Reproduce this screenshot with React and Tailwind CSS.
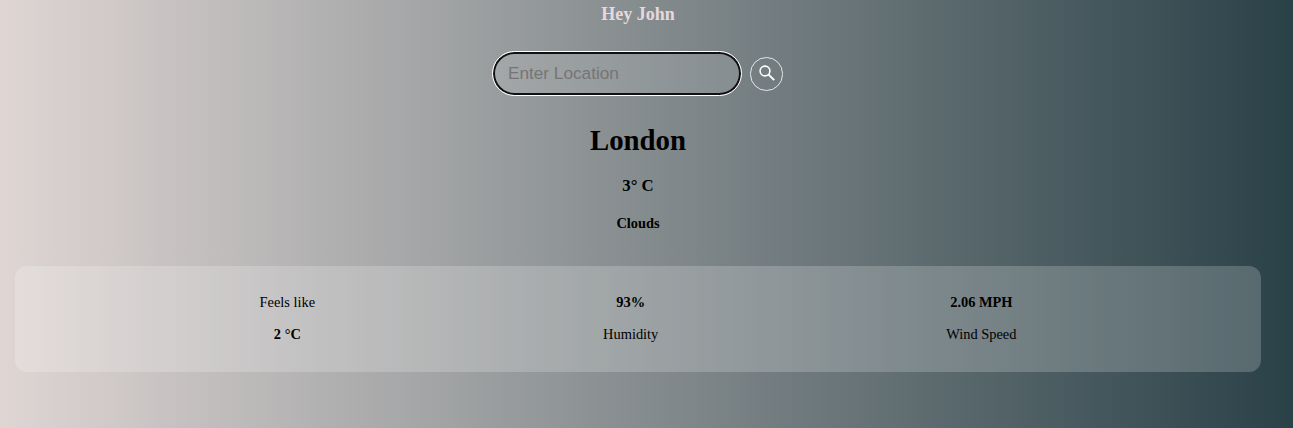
const stats = [
  { top: 'Feels like', bottom: '2 °C', bold: 'bottom' },
  { top: '93%', bottom: 'Humidity', bold: 'top' },
  { top: '2.06 MPH', bottom: 'Wind Speed', bold: 'top' },
];

function SearchBar() {
  return (
    <form className="mt-[26px] mr-[2px] flex items-center gap-[8px]" onSubmit={(e) => e.preventDefault()}>
      <input
        type="text"
        placeholder="Enter Location"
        className="h-[45px] w-[250px] rounded-full border border-white bg-white/10 px-[15.5px] font-['Liberation_Sans',sans-serif] text-[17.2px] text-black shadow-[inset_0_0_0_2px_#101010] outline-none placeholder:text-[#757575]"
      />
      <button
        type="submit"
        aria-label="Search"
        className="flex h-[34px] w-[33px] items-center justify-center rounded-full border border-white/80 pb-[2px] pl-px text-white"
      >
        <svg width="16" height="16" viewBox="0 0 16 16" fill="none" stroke="currentColor">
          <circle cx="6" cy="6" r="4.9" strokeWidth="1.6" />
          <path d="M9.6 9.6 15.2 15.2" strokeWidth="1.9" />
        </svg>
      </button>
    </form>
  );
}

function Stat({ top, bottom, bold }) {
  return (
    <div className="flex flex-col items-center gap-[16px] text-[14.4px] leading-[16px]">
      <p className={bold === 'top' ? 'font-bold' : ''}>{top}</p>
      <p className={bold === 'bottom' ? 'font-bold' : ''}>{bottom}</p>
    </div>
  );
}

export default function App() {
  return (
    <main className="flex h-[428px] flex-col items-center overflow-hidden bg-[linear-gradient(to_right,#dfd6d4,#2a4148)] pr-[32px] pl-[15px] font-['Liberation_Serif',serif] text-black">
      <h3 className="mt-[3px] text-[18px] leading-[22px] font-bold text-[#e6d9d9]">Hey John</h3>
      <SearchBar />
      <h1 className="mt-[27px] text-[28.8px] leading-[34px] font-bold">London</h1>
      <h3 className="mt-[19px] text-[16.8px] leading-[20px] font-bold">3° C</h3>
      <h4 className="mt-[19px] text-[14.4px] leading-[16px] font-bold">Clouds</h4>
      <section className="mt-[35px] flex h-[106px] w-full justify-center gap-[288px] rounded-[12px] bg-white/20 pt-[28px]">
        {stats.map((s) => (
          <Stat key={s.top} {...s} />
        ))}
      </section>
    </main>
  );
}
